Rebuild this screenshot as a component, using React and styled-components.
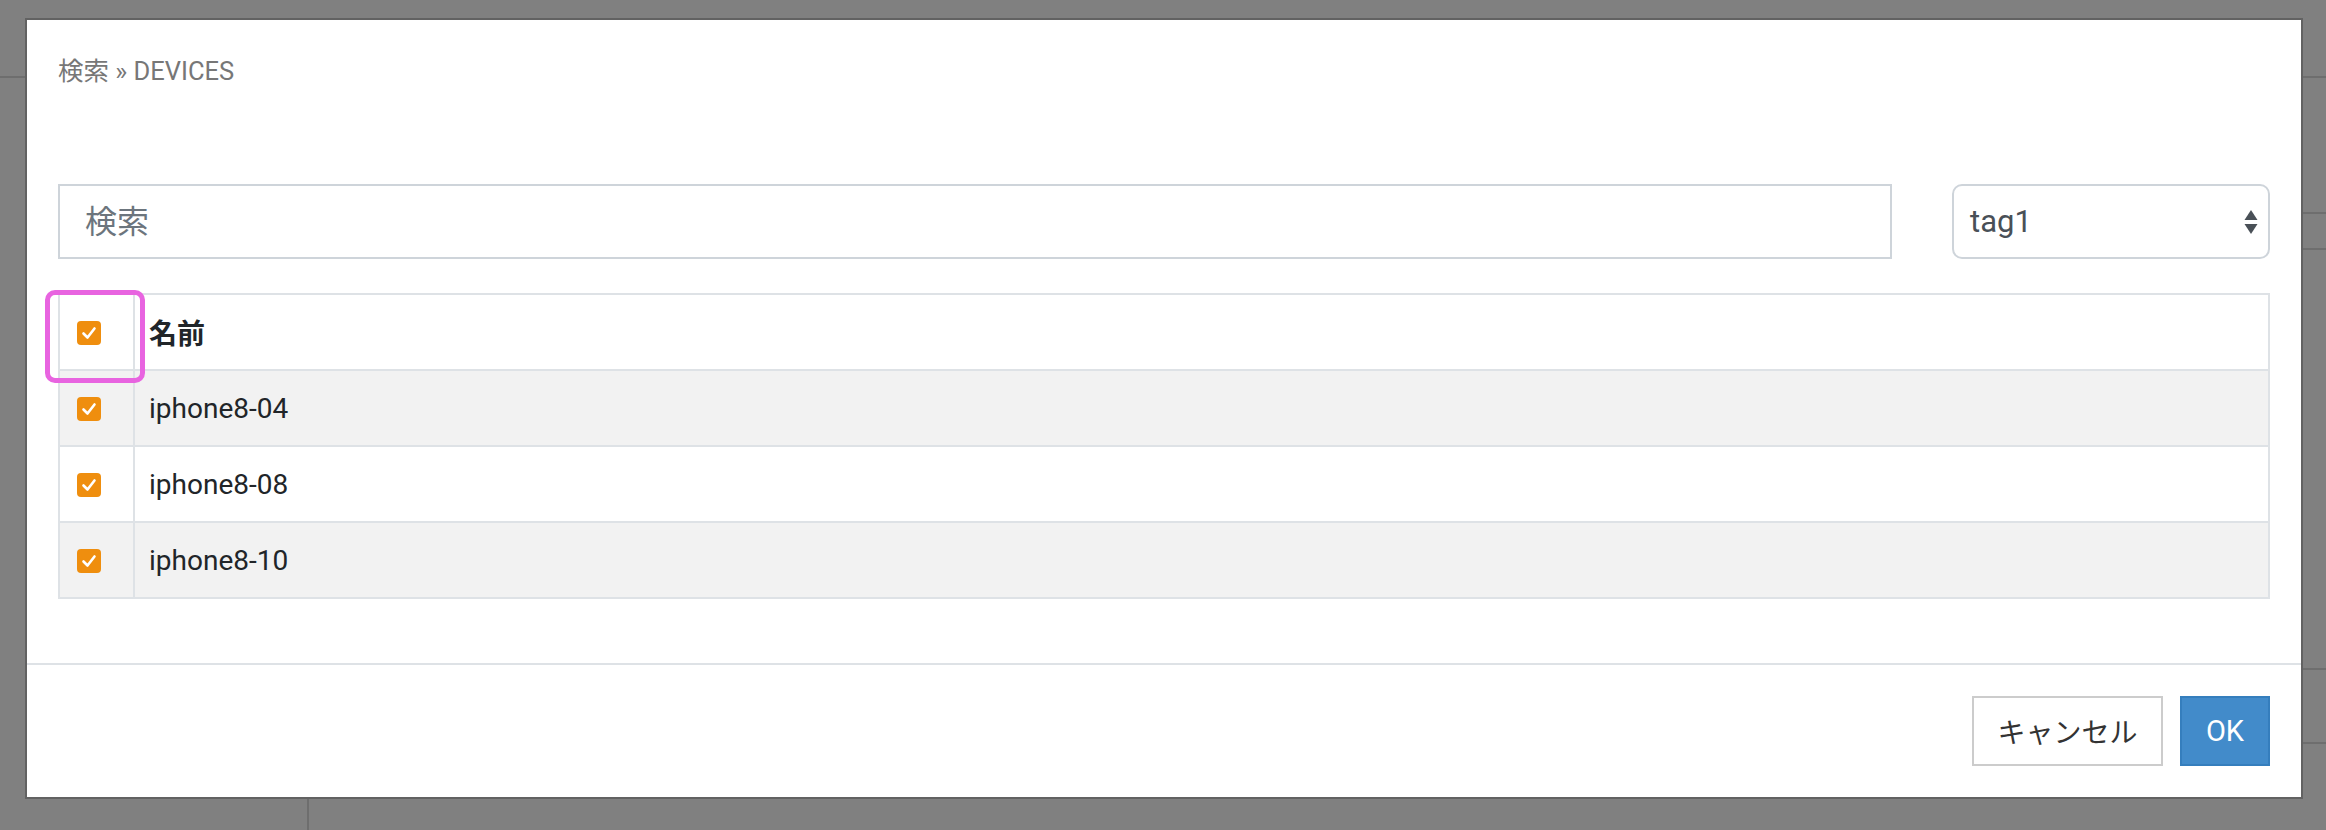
import React from 'react'
import styled, { createGlobalStyle } from 'styled-components'

const GlobalStyle = createGlobalStyle`
  html, body {
    margin: 0;
    padding: 0;
    background: #808080;
  }
  * {
    box-sizing: border-box;
  }
`

// page behind the overlay (only a few lines show through)
const Page = styled.div`
  position: relative;
  width: 2326px;
  height: 830px;
  overflow: hidden;
  background: #808080;
  font-family: 'Roboto', 'Noto Sans CJK JP', sans-serif;
`
const PageHeader = styled.div`
  height: 78px;
  border-bottom: 2px solid #6e6e6e;
`
const PageBody = styled.div`
  display: flex;
  height: 752px;
`
const Sidebar = styled.div`
  width: 309px;
  border-right: 2px solid #6e6e6e;
`
const PageMain = styled.div`
  flex: 1;
  padding-top: 134px;
`
const PageRow = styled.div`
  height: ${(p) => p.h}px;
  border-top: 2px solid #6e6e6e;
`

const Modal = styled.div`
  position: absolute;
  left: 25px;
  top: 18px;
  width: 2278px;
  height: 781px;
  background: #fff;
  border: 2px solid #626262;
  display: flex;
  flex-direction: column;
`
const ModalBody = styled.div`
  padding: 33px 31px 0 31px;
`
const Breadcrumb = styled.div`
  font-size: 25.5px;
  line-height: 36px;
  color: #777;
`
const FilterRow = styled.div`
  display: flex;
  align-items: center;
  gap: 60px;
  margin-top: 95px;
`
const SearchInput = styled.input`
  flex: 1;
  height: 75px;
  border: 2px solid #ced4da;
  border-radius: 0;
  padding: 0 25px;
  font-family: 'Roboto', 'Noto Sans CJK JP', sans-serif;
  font-size: 32px;
  color: #495057;
  outline: none;
  &::placeholder {
    color: #6c757d;
  }
`
const SelectBox = styled.div`
  width: 318px;
  height: 75px;
  border: 2px solid #ced4da;
  border-radius: 10px;
  display: flex;
  align-items: center;
  justify-content: space-between;
  padding: 0 10px 0 16px;
  font-size: 31px;
  color: #495057;
`
const Arrows = styled.svg`
  width: 14px;
  height: 28px;
  margin-top: 2px;
`

const Table = styled.table`
  width: 100%;
  margin-top: 34px;
  border-collapse: collapse;
  table-layout: fixed;
  font-size: 28px;
  color: #212529;
`
const CheckCol = styled.col`
  width: 75px;
`
const Row = styled.tr`
  height: 76px;
  background: ${(p) => (p.striped ? '#f2f2f2' : '#fff')};
`
const CheckCell = styled.td`
  position: relative;
  border: 2px solid #dee2e6;
  vertical-align: middle;
  padding: 2px 0 0 17px;
`
const NameCell = styled.td`
  border: 2px solid #dee2e6;
  padding: 0 14px;
  vertical-align: middle;
  font-weight: ${(p) => (p.head ? 700 : 400)};
`
const Box = styled.span`
  display: flex;
  align-items: center;
  justify-content: center;
  width: 24px;
  height: 24px;
  border-radius: 4px;
  background: #ef8e0e;
`
const Highlight = styled.div`
  position: absolute;
  left: -15px;
  top: -5px;
  width: 100px;
  height: 93px;
  border: 5px solid #e864e0;
  border-radius: 10px;
  pointer-events: none;
`

const ModalFooter = styled.div`
  margin-top: auto;
  border-top: 2px solid #dee2e6;
  display: flex;
  justify-content: flex-end;
  gap: 17px;
  padding: 31px 31px 31px;
`
const Button = styled.button`
  height: 70px;
  width: ${(p) => (p.primary ? 90 : 191)}px;
  padding: 0;
  font-family: 'Roboto', 'Noto Sans CJK JP', sans-serif;
  font-size: ${(p) => (p.primary ? 29 : 28)}px;
  border: 2px solid ${(p) => (p.primary ? '#357ebd' : '#cccccc')};
  background: ${(p) => (p.primary ? '#428bca' : '#fff')};
  color: ${(p) => (p.primary ? '#fff' : '#333')};
  border-radius: 0;
`

const Check = () => (
  <Box>
    <svg width="24" height="24" viewBox="0 0 24 24">
      <path
        d="M6.5 12.5 L10.5 16.5 L17.5 7.5"
        fill="none"
        stroke="#fff"
        strokeWidth="2.6"
        strokeLinecap="round"
        strokeLinejoin="round"
      />
    </svg>
  </Box>
)

const devices = ['iphone8-04', 'iphone8-08', 'iphone8-10']

const App = () => {
  return (
    <>
      <GlobalStyle />
      <Page>
        <PageHeader />
        <PageBody>
          <Sidebar />
          <PageMain>
            <PageRow h={36} />
            <PageRow h={420} />
            <PageRow h={74} />
            <PageRow h={40} />
          </PageMain>
        </PageBody>

        <Modal>
          <ModalBody>
            <Breadcrumb>検索 » DEVICES</Breadcrumb>
            <FilterRow>
              <SearchInput type="text" placeholder="検索" />
              <SelectBox>
                <span>tag1</span>
                <Arrows viewBox="0 0 14 28">
                  <path d="M7 1 L13.5 11 L0.5 11 Z" fill="#495057" />
                  <path d="M0.5 15 L13.5 15 L7 25 Z" fill="#495057" />
                </Arrows>
              </SelectBox>
            </FilterRow>
            <Table>
              <colgroup>
                <CheckCol />
                <col />
              </colgroup>
              <tbody>
                <Row>
                  <CheckCell>
                    <Check />
                    <Highlight />
                  </CheckCell>
                  <NameCell head>名前</NameCell>
                </Row>
                {devices.map((name, index) => (
                  <Row key={name} striped={index % 2 === 0}>
                    <CheckCell>
                      <Check />
                    </CheckCell>
                    <NameCell>{name}</NameCell>
                  </Row>
                ))}
              </tbody>
            </Table>
          </ModalBody>
          <ModalFooter>
            <Button>キャンセル</Button>
            <Button primary>OK</Button>
          </ModalFooter>
        </Modal>
      </Page>
    </>
  )
}

export default App
